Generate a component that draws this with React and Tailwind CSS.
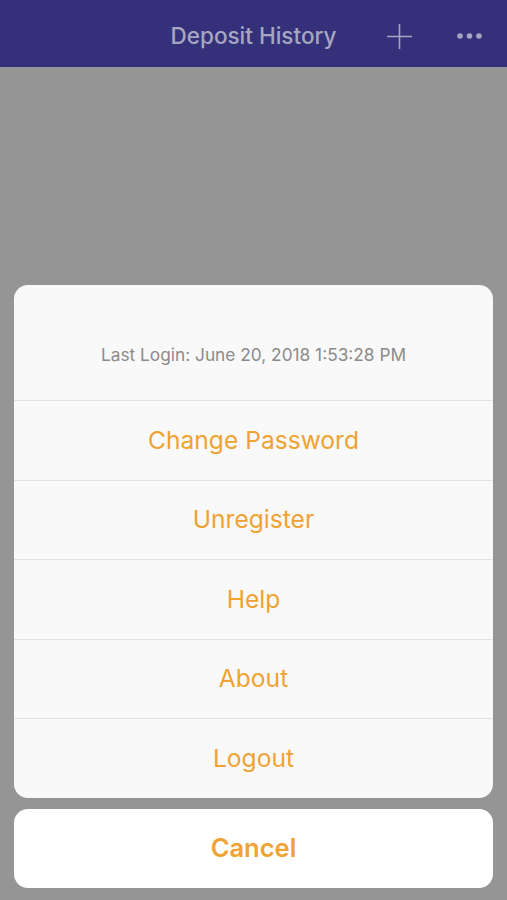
const items = ["Change Password", "Unregister", "Help", "About", "Logout"];

export default function App() {
  return (
    <div className="h-[900px] w-full bg-[#959595] font-['Inter',sans-serif] flex flex-col">
      <div className="h-[67px] bg-[#34317a] flex items-center relative">
        <div className="w-full text-center text-[22.5px] text-[#a7a6c2] font-medium pt-[5px]">Deposit History</div>
        <div className="absolute right-0 top-0 h-full flex items-center gap-[45px] pr-[25px] pt-[5px]">
          <svg width="25" height="25" viewBox="0 0 25 25" className="text-[#a7a6c2]">
            <path d="M12.5 0v25M0 12.5h25" stroke="currentColor" strokeWidth="1.6" fill="none" />
          </svg>
          <svg width="25" height="8" viewBox="0 0 25 8" className="text-[#a7a6c2]">
            <circle cx="3" cy="4" r="2.8" fill="currentColor" />
            <circle cx="12.5" cy="4" r="2.8" fill="currentColor" />
            <circle cx="22" cy="4" r="2.8" fill="currentColor" />
          </svg>
        </div>
      </div>
      <div className="flex-1 flex flex-col px-[14px] pt-[218px]">
        <div className="bg-[#f9f9f9] rounded-[14px] overflow-hidden">
          <div className="h-[115px] flex items-center justify-center text-[17.3px] text-[#8b8b8b] pt-[24px]">
            Last Login: June 20, 2018 1:53:28 PM
          </div>
          {items.map((t) => (
            <div key={t} className="h-[79.5px] border-t border-[#e3e3e3] flex items-center justify-center text-[24.6px] text-[#f0a233]">
              {t}
            </div>
          ))}
        </div>
        <div className="mt-[11px] h-[79px] bg-white rounded-[14px] flex items-center justify-center text-[25.5px] font-semibold text-[#f0a233]">
          Cancel
        </div>
      </div>
    </div>
  );
}
